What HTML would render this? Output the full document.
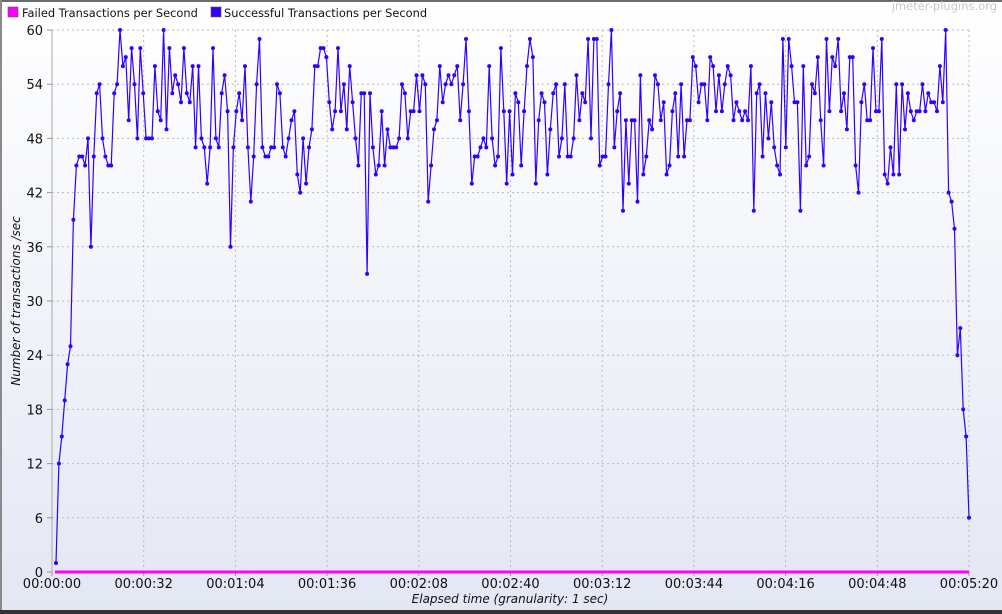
<!DOCTYPE html>
<html><head><meta charset="utf-8"><style>
html,body{margin:0;padding:0;width:1002px;height:614px;overflow:hidden;background:#fff}
svg{display:block}
text{font-family:"DejaVu Sans","Liberation Sans",sans-serif;}
</style></head><body>
<svg id="s" width="1002" height="614" xmlns="http://www.w3.org/2000/svg">
<defs><linearGradient id="bg" x1="0" y1="0" x2="0" y2="1"><stop offset="0" stop-color="#ffffff"/><stop offset="1" stop-color="#e3e7f3"/></linearGradient></defs>
<rect x="0" y="0" width="1002" height="614" fill="url(#bg)"/>
<rect x="0" y="0" width="1002" height="2" fill="#6b6b6b"/>
<rect x="0" y="0" width="2" height="614" fill="#8a8a8a"/>
<rect x="0" y="610" width="1002" height="4" fill="#333"/>
<rect x="8" y="7" width="10" height="10" fill="#ff00ff" stroke="#555" stroke-width="0.6"/>
<text x="22" y="17" font-size="11.4" fill="#111">Failed Transactions per Second</text>
<rect x="211" y="7" width="10" height="10" fill="#3300ff" stroke="#555" stroke-width="0.6"/>
<text x="224" y="17" font-size="11.4" fill="#111">Successful Transactions per Second</text>
<text x="997" y="10" font-size="11.5" fill="#c8c8c8" text-anchor="end">jmeter-plugins.org</text>
<g id="grid"></g>
<g id="data"></g>
<text x="510" y="603" font-size="12" font-style="italic" fill="#111" text-anchor="middle">Elapsed time (granularity: 1 sec)</text>
<text transform="translate(20,301) rotate(-90)" font-size="12" font-style="italic" fill="#111" text-anchor="middle">Number of transactions /sec</text>
</svg>
<script>
var NS="http://www.w3.org/2000/svg",g=document.getElementById('grid'),d=document.getElementById('data');
function el(t,a,p){var e=document.createElementNS(NS,t);for(var k in a)e.setAttribute(k,a[k]);(p||g).appendChild(e);return e;}
var X0=52,X1=969,Y0=572,Y60=30;
function yv(v){return Y0-(Y0-Y60)*v/60;}
for(var v=0;v<=60;v+=6){var y=yv(v);
 if(v>0)el('line',{x1:X0,x2:X1,y1:y,y2:y,stroke:'#bbb','stroke-dasharray':'2,3'});
 el('line',{x1:X0-5,x2:X0,y1:y,y2:y,stroke:'#999'});
 var t=el('text',{x:X0-9,y:y+5,'font-size':'13','text-anchor':'end',fill:'#111'});t.textContent=v;}
var labs=["00:00:00","00:00:32","00:01:04","00:01:36","00:02:08","00:02:40","00:03:12","00:03:44","00:04:16","00:04:48","00:05:20"];
for(var i=0;i<=10;i++){var x=X0+(X1-X0)*i/10;
 if(i>0)el('line',{x1:x,x2:x,y1:Y60,y2:Y0,stroke:'#bbb','stroke-dasharray':'2,3'});
 el('line',{x1:x,x2:x,y1:Y0,y2:Y0+4,stroke:'#999'});
 var t=el('text',{x:x,y:588,'font-size':'13','text-anchor':'middle',fill:'#111'});t.textContent=labs[i];}
el('line',{x1:X0,x2:X0,y1:Y60,y2:Y0,stroke:'#aaa'});
var vals=[1,12,15,19,23,25,39,45,46,46,45,48,36,46,53,54,48,46,45,45,53,54,60,56,57,50,58,54,48,58,53,48,48,48,56,51,50,60,49,58,53,55,54,52,58,53,52,56,47,56,48,47,43,47,58,48,47,53,55,51,36,47,51,53,50,56,47,41,46,54,59,47,46,46,47,47,54,53,47,46,48,50,51,44,42,48,43,47,49,56,56,58,58,57,52,49,51,58,51,54,49,56,52,48,45,53,53,33,53,47,44,45,51,45,49,47,47,47,48,54,53,48,51,51,55,51,55,54,41,45,49,50,56,52,54,55,54,55,56,50,54,59,51,43,46,46,47,48,47,56,48,45,46,58,51,43,51,44,53,52,45,51,56,59,57,43,50,53,52,44,49,53,54,46,48,54,46,46,48,55,50,53,52,59,48,59,59,45,46,46,54,60,47,51,53,40,50,43,50,50,41,55,44,46,50,49,55,54,50,52,44,45,51,53,46,54,46,50,50,57,56,52,54,54,50,57,56,51,55,51,54,56,55,50,52,51,50,51,50,56,40,53,54,46,53,48,52,47,45,44,59,47,59,56,52,52,40,56,45,46,54,53,57,50,45,59,51,57,56,59,51,53,49,57,57,45,42,52,54,50,50,58,51,51,59,44,43,47,44,54,44,54,49,53,51,50,51,51,54,51,53,52,52,51,56,52,60,42,41,38,24,27,18,15,6];
var n=vals.length,xs=56,xe=969,pts=[];
for(var i=0;i<n;i++){pts.push((xs+(xe-xs)*i/(n-1)).toFixed(1)+','+yv(vals[i]).toFixed(1));}
el('line',{x1:55,x2:969,y1:Y0,y2:Y0,stroke:'#ff00ff','stroke-width':'3'},d);
el('polyline',{points:pts.join(' '),fill:'none',stroke:'#3300ff','stroke-width':'1.2'},d);
for(var i=0;i<n;i++){var p=pts[i].split(',');el('circle',{cx:p[0],cy:p[1],r:'2',fill:'#3300ff'},d);}
</script>
</body></html>
